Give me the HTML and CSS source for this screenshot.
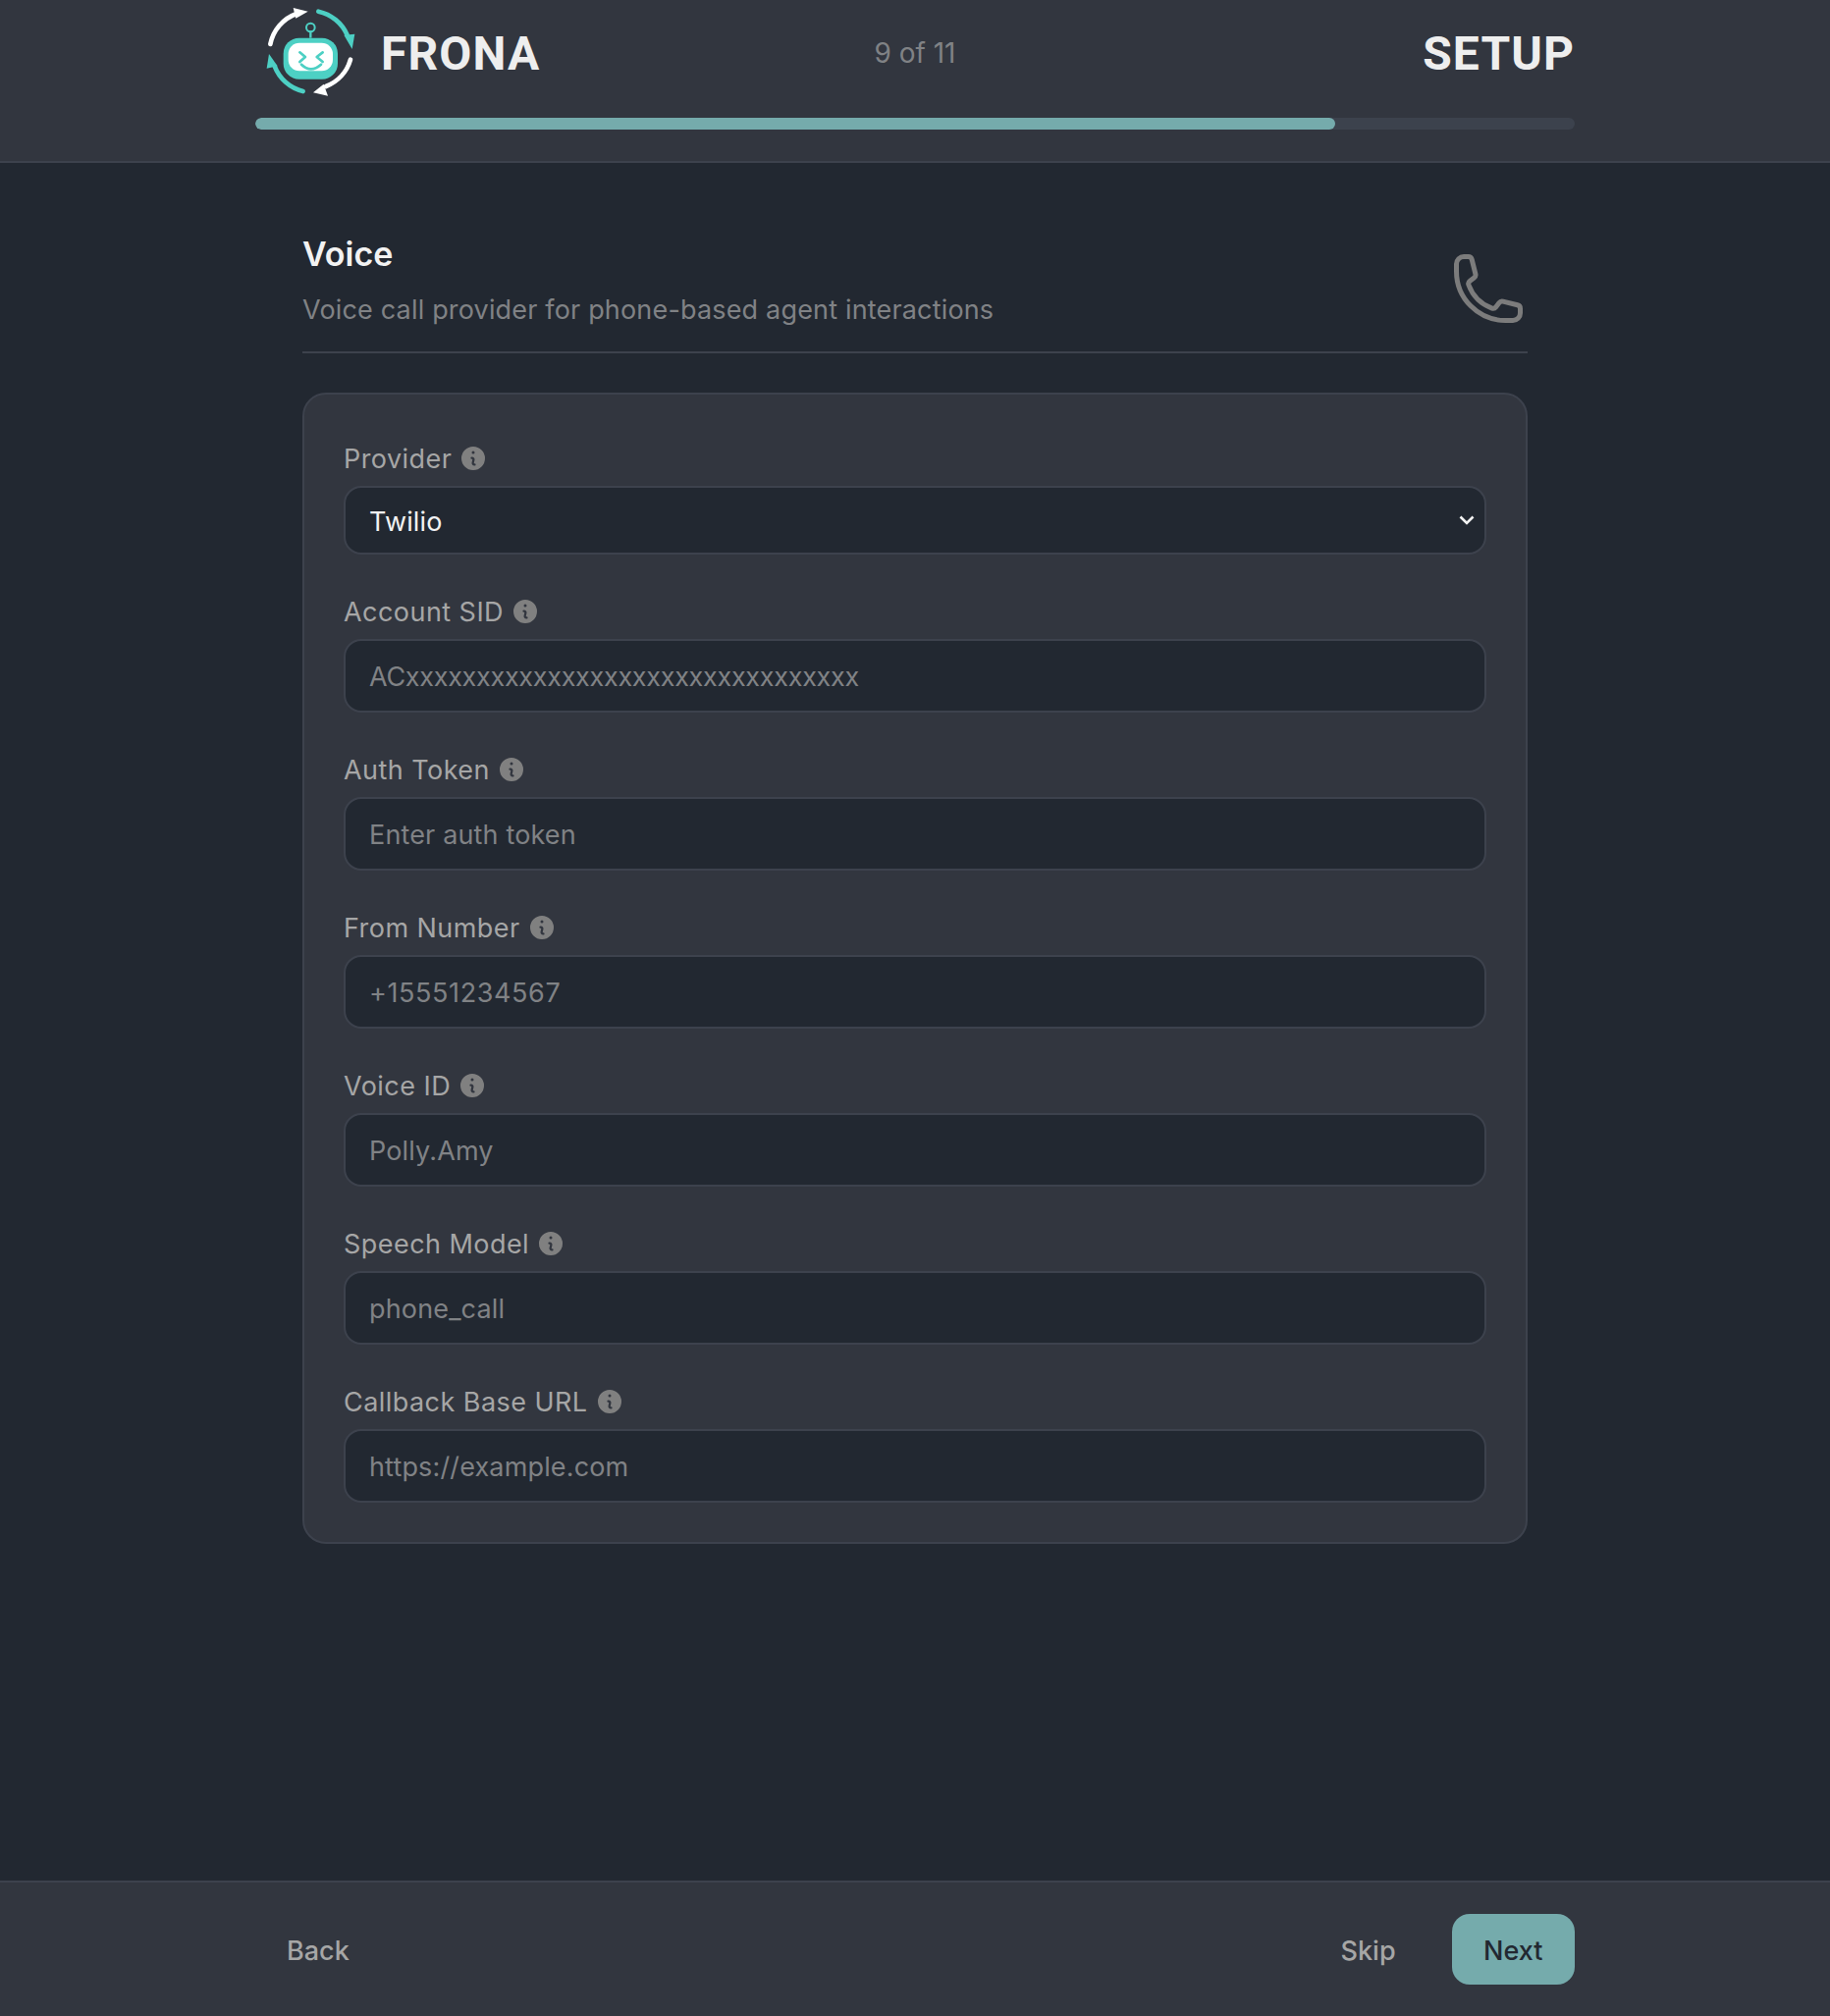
FILE: index.html
```html
<!DOCTYPE html>
<html lang="en">
<head>
    <meta charset="UTF-8">
    <meta name="viewport" content="width=device-width, initial-scale=1.0">
    <title>Frona Setup</title>
    <link rel="stylesheet" href="styles.css">
</head>
<body>
    <svg class="icon-defs" width="0" height="0" aria-hidden="true">
        <symbol id="info" viewBox="0 0 20 20">
            <path fill-rule="evenodd" clip-rule="evenodd" d="M18 10a8 8 0 1 1-16 0 8 8 0 0 1 16 0Zm-7-4a1 1 0 1 1-2 0 1 1 0 0 1 2 0ZM9 9a.75.75 0 0 0 0 1.5h.253a.25.25 0 0 1 .244.304l-.459 2.066A1.75 1.75 0 0 0 10.747 15H11a.75.75 0 0 0 0-1.5h-.253a.25.25 0 0 1-.244-.304l.459-2.066A1.75 1.75 0 0 0 9.253 9H9Z"/>
        </symbol>
    </svg>

    <header class="top">
        <div class="wrap">
            <div class="top-row">
                <div class="brand">
                    <svg class="logo" viewBox="80 10 300 300" width="100" height="100">
                        <g fill="none" stroke-width="14" stroke-linecap="round">
                            <path stroke="#ffffff" d="M105 133A125 125 0 0 1 185 40"/>
                            <path stroke="#4dd0c4" d="M252 33A125 125 0 0 1 340 105"/>
                            <path stroke="#ffffff" d="M350 180A125 125 0 0 1 275 262"/>
                            <path stroke="#4dd0c4" d="M205 277A125 125 0 0 1 118 200"/>
                        </g>
                        <polygon fill="#ffffff" points="220,33 175,22 183,54"/>
                        <polygon fill="#4dd0c4" points="355,148 330,105 363,102"/>
                        <polygon fill="#ffffff" points="236,281 281,291 268,255"/>
                        <polygon fill="#4dd0c4" points="101,163 94,207 127,200"/>
                        <rect x="145" y="114" width="166" height="126" rx="48" fill="#4dd0c4"/>
                        <rect x="160" y="129" width="136" height="86" rx="34" fill="#ffffff"/>
                        <g fill="none" stroke="#4dd0c4" stroke-width="8" stroke-linecap="round" stroke-linejoin="round">
                            <path d="M195 158l17 14-17 15"/>
                            <path d="M265 158l-18 14 18 15"/>
                            <path d="M200 195q29 28 60 0"/>
                        </g>
                        <path d="M228 114V92" stroke="#4dd0c4" stroke-width="7" fill="none"/>
                        <circle cx="228" cy="82" r="13" fill="none" stroke="#4dd0c4" stroke-width="6"/>
                    </svg>
                    <span class="word">FRONA</span>
                </div>
                <div class="step-count">9 of 11</div>
                <div class="word word-right">SETUP</div>
            </div>
            <div class="progress"><div class="progress-fill" style="width: 81.82%"></div></div>
        </div>
    </header>

    <main class="content">
        <div class="section-head">
            <div>
                <h1>Voice</h1>
                <p>Voice call provider for phone-based agent interactions</p>
            </div>
            <svg class="phone" viewBox="0 0 24 24" width="80" height="80" fill="none" stroke="#7c7c7c" stroke-width="1.5" stroke-linecap="round" stroke-linejoin="round">
                <path d="M2.25 6.75c0 8.284 6.716 15 15 15h2.25a2.25 2.25 0 0 0 2.25-2.25v-1.372c0-.516-.351-.966-.852-1.091l-4.423-1.106c-.44-.11-.902.055-1.173.417l-.97 1.293c-.282.376-.769.542-1.21.38a12.035 12.035 0 0 1-7.143-7.143c-.162-.441.004-.928.38-1.21l1.293-.97c.363-.271.527-.734.417-1.173L6.963 3.102a1.125 1.125 0 0 0-1.091-.852H4.5A2.25 2.25 0 0 0 2.25 4.5v2.25Z"/>
            </svg>
        </div>

        <form class="card">
            <div class="field">
                <label for="provider">Provider <svg class="info"><use href="#info"/></svg></label>
                <select id="provider"><option>Twilio</option></select>
            </div>
            <div class="field">
                <label for="sid">Account SID <svg class="info"><use href="#info"/></svg></label>
                <input id="sid" class="input-tight" type="text" placeholder="ACxxxxxxxxxxxxxxxxxxxxxxxxxxxxxxxx">
            </div>
            <div class="field">
                <label for="token">Auth Token <svg class="info"><use href="#info"/></svg></label>
                <input id="token" type="text" placeholder="Enter auth token">
            </div>
            <div class="field">
                <label for="from">From Number <svg class="info"><use href="#info"/></svg></label>
                <input id="from" class="input-digits" type="text" placeholder="+15551234567">
            </div>
            <div class="field">
                <label for="voice">Voice ID <svg class="info"><use href="#info"/></svg></label>
                <input id="voice" type="text" placeholder="Polly.Amy">
            </div>
            <div class="field">
                <label for="model">Speech Model <svg class="info"><use href="#info"/></svg></label>
                <input id="model" type="text" placeholder="phone_call">
            </div>
            <div class="field">
                <label for="callback">Callback Base URL <svg class="info"><use href="#info"/></svg></label>
                <input id="callback" type="text" placeholder="https://example.com">
            </div>
        </form>
    </main>

    <footer class="bottom">
        <div class="wrap bottom-row">
            <button type="button" class="btn">Back</button>
            <div class="bottom-right">
                <button type="button" class="btn">Skip</button>
                <button type="button" class="btn btn-next">Next</button>
            </div>
        </div>
    </footer>
</body>
</html>
```

FILE: styles.css
```css
* {
    box-sizing: border-box;
}
html, body {
    height: 100%;
}
body {
    margin: 0;
    display: flex;
    flex-direction: column;
    min-height: 100vh;
    background-color: #222831;
    color: #a6a6a6;
    font-family: Inter, "Liberation Sans", sans-serif;
    font-size: 27px;
}
.icon-defs {
    position: absolute;
}
.wrap {
    width: 1344px;
    margin: 0 auto;
}

/* header */
.top {
    height: 166px;
    background-color: #32363f;
    border-bottom: 2px solid #3d424d;
}
.top-row {
    display: grid;
    grid-template-columns: 1fr auto 1fr;
    align-items: center;
    height: 108px;
    margin-bottom: 12px;
}
.brand {
    display: flex;
    align-items: center;
    padding-left: 7px;
}
.logo {
    margin-right: 21px;
}
.word {
    font-family: Roboto, sans-serif;
    font-size: 48px;
    font-weight: 700;
    color: #eeeeee;
    letter-spacing: 1.1px;
}
.word-right {
    text-align: right;
}
.step-count {
    color: #808285;
    font-size: 28px;
}
.progress {
    height: 12px;
    border-radius: 6px;
    background-color: #3c424d;
    overflow: hidden;
}
.progress-fill {
    height: 100%;
    border-radius: 6px;
    background-color: #75abac;
}

/* main */
.content {
    flex: 1;
    width: 1248px;
    margin: 0 auto;
    padding-top: 66px;
}
.section-head {
    display: flex;
    justify-content: space-between;
    align-items: flex-end;
    padding-bottom: 24px;
    border-bottom: 2px solid #3d424d;
    margin-bottom: 40px;
}
h1 {
    margin: 0 0 12px;
    font-size: 34px;
    line-height: 54px;
    font-weight: 600;
    color: #f2f2f2;
}
.section-head p {
    margin: 0;
    line-height: 36px;
    color: #808285;
    letter-spacing: 0.17px;
}
.card {
    display: flex;
    flex-direction: column;
    gap: 40px;
    padding: 47px 40px 40px;
    background-color: #32363f;
    border: 2px solid #3d424d;
    border-radius: 24px;
}
.field label {
    display: flex;
    align-items: center;
    gap: 7px;
    height: 36px;
    margin-bottom: 10px;
    letter-spacing: 0.45px;
}
.info {
    width: 30px;
    height: 30px;
    fill: #808080;
}
input, select {
    display: block;
    width: 100%;
    height: 75px;
    padding: 2px 24px 0;
    background-color: #222831;
    border: 2px solid #3d424d;
    border-radius: 18px;
    color: #f2f2f2;
    font-family: inherit;
    font-size: 27px;
    letter-spacing: 0.15px;
    outline: none;
}
input::placeholder {
    color: #808285;
    opacity: 1;
}
.input-tight {
    letter-spacing: -0.3px;
}
.input-digits {
    letter-spacing: 0.6px;
}
select {
    height: 70px;
    appearance: none;
    background-image: url("data:image/svg+xml,%3Csvg xmlns='http://www.w3.org/2000/svg' viewBox='0 0 16 10'%3E%3Cpath d='M1.5 1.5 8 8l6.500-6.500' fill='none' stroke='%23f2f2f2' stroke-width='2.600'/%3E%3C/svg%3E");
    background-repeat: no-repeat;
    background-position: right 10px center;
    background-size: 16px 10px;
}

/* footer */
.bottom {
    height: 138px;
    padding-top: 32px;
    background-color: #32363f;
    border-top: 2px solid #3d424d;
}
.bottom-row {
    display: flex;
    justify-content: space-between;
}
.bottom-right {
    display: flex;
    gap: 25px;
}
.btn {
    height: 72px;
    padding: 2px 32px 0;
    background: none;
    border: none;
    border-radius: 18px;
    color: #a6a6a6;
    font-family: inherit;
    font-size: 27px;
    font-weight: 500;
    cursor: pointer;
}
.btn-next {
    padding: 2px 32.5px 0;
    background-color: #75abac;
    color: #222831;
}
```
